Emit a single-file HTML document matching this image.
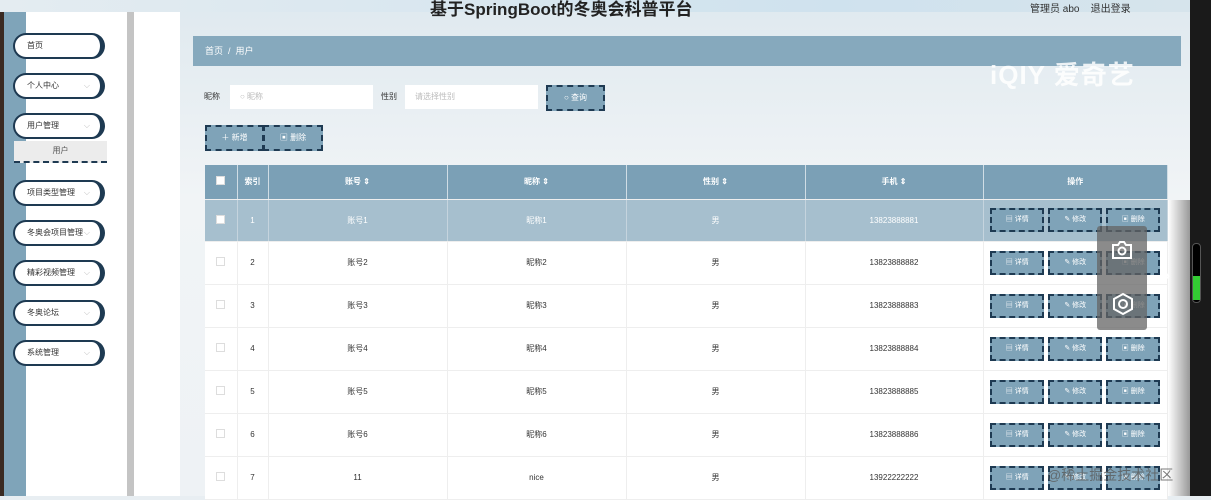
<!DOCTYPE html>
<html><head><meta charset="utf-8"><style>
*{box-sizing:border-box;margin:0;padding:0}
body{width:1211px;height:496px;overflow:hidden;position:relative;background:#e8eef2;font-family:"Liberation Sans","Noto Sans CJK SC",sans-serif;font-size:9px;color:#333}
.abs{position:absolute}
.bg{left:134px;top:0;width:1056px;height:496px;background:linear-gradient(180deg,#dfe9ef 0,#f1f4f6 40%,#eef2f5 100%)}
.top{left:0;top:0;width:1190px;height:12px;background:linear-gradient(90deg,#e4ecf1,#cfe2ee 70%,#d6e4ec)}
.title{left:430px;top:-5px;font-size:17px;font-weight:bold;color:#222}
.side{left:0;top:12px;width:127px;height:484px;background:#fff;border-left:4px solid #3a2a22}
.strip{left:4px;top:12px;width:22px;height:484px;background:#7fa4b9}
.grey{left:127px;top:12px;width:7px;height:484px;background:#c4c4c4}
.white2{left:134px;top:12px;width:46px;height:484px;background:#fff}
.mi{position:absolute;left:13px;width:92px;height:26px;border-radius:13px;background:#fff;border:2px solid #1e3a52;border-right-width:5px;font-size:8px;line-height:22px;padding-left:12px;color:#333}
.mi i{position:absolute;right:10px;top:0;font-style:normal;color:#bbb;font-size:8px}
.crumb{left:193px;top:36px;width:988px;height:30px;background:#86a9bd;color:#fff;font-size:9px;line-height:30px;padding-left:12px}
.inp{background:#fff;height:24px;top:85px;font-size:8px;color:#bbb;line-height:24px;padding-left:10px}
.btn{position:absolute;background:#7fa3b8;border:2px dashed #1e3a52;color:#fff;font-size:8px;text-align:center}
table{position:absolute;left:205px;top:165px;border-collapse:collapse;width:963px}
td,th{text-align:center;font-size:8px;border-right:1px solid #eee;border-bottom:1px solid #eee}
th{background:#7ba0b6;color:#fff;height:34px;font-weight:bold;border-right:1px solid #d0dde5}
tr.r td{height:43px;background:#fff}
tr.h td{background:#a6bfce;color:#fff;height:42px;border-right:1px solid #c5d4de}
.cb{display:inline-block;width:9px;height:9px;border:1px solid #ddd;background:#fff}
.ab{display:inline-block;width:54px;height:24px;margin:0 2px;background:#7fa3b8;border:2px dashed #1e3a52;color:#fff;font-size:7px;line-height:20px;vertical-align:middle}
.right{left:1190px;top:0;width:21px;height:496px;background:#1a1a1a}
</style></head><body>
<div class="abs bg"></div>
<div class="abs top"></div>
<div class="abs title">基于SpringBoot的冬奥会科普平台</div>
<div class="abs" style="left:1030px;top:0;font-size:10px;color:#333">管理员 abo &nbsp;&nbsp; 退出登录</div>
<div class="abs side"></div>
<div class="abs strip"></div>
<div class="abs grey"></div>
<div class="abs white2"></div>
<div class="mi" style="top:33px">首页</div>
<div class="mi" style="top:73px">个人中心<i>⌵</i></div>
<div class="mi" style="top:113px">用户管理<i>⌵</i></div>
<div class="abs" style="left:14px;top:141px;width:93px;height:22px;background:#ececec;border-bottom:2px dashed #1e3a52;text-align:center;line-height:20px;font-size:8px;color:#555">用户</div>
<div class="mi" style="top:180px">项目类型管理<i>⌵</i></div>
<div class="mi" style="top:220px">冬奥会项目管理<i>⌵</i></div>
<div class="mi" style="top:260px">精彩视频管理<i>⌵</i></div>
<div class="mi" style="top:300px">冬奥论坛<i>⌵</i></div>
<div class="mi" style="top:340px">系统管理<i>⌵</i></div>
<div class="abs crumb">首页 &nbsp;/&nbsp; 用户</div>
<div class="abs" style="left:990px;top:55px;font-size:26px;color:rgba(255,255,255,.85);font-weight:bold;letter-spacing:1px">iQIY 爱奇艺</div>
<div class="abs" style="left:204px;top:91px;font-size:8px">昵称</div>
<div class="abs inp" style="left:230px;width:143px">○ 昵称</div>
<div class="abs" style="left:381px;top:91px;font-size:8px">性别</div>
<div class="abs inp" style="left:405px;width:133px">请选择性别</div>
<div class="btn" style="left:546px;top:85px;width:59px;height:26px;line-height:22px">○ 查询</div>
<div class="btn" style="left:205px;top:125px;width:59px;height:26px;line-height:22px">＋ 新增</div>
<div class="btn" style="left:263px;top:125px;width:60px;height:26px;line-height:22px">▣ 删除</div>
<table>
<tr><th style="width:32px"><span class="cb"></span></th><th style="width:31px">索引</th><th style="width:179px">账号 ⇕</th><th style="width:179px">昵称 ⇕</th><th style="width:179px">性别 ⇕</th><th style="width:178px">手机 ⇕</th><th>操作</th></tr>
<tr class="h"><td><span class="cb"></span></td><td>1</td><td>账号1</td><td>昵称1</td><td>男</td><td>13823888881</td><td><span class="ab">▤ 详情</span><span class="ab">✎ 修改</span><span class="ab">▣ 删除</span></td></tr>
<tr class="r"><td><span class="cb"></span></td><td>2</td><td>账号2</td><td>昵称2</td><td>男</td><td>13823888882</td><td><span class="ab">▤ 详情</span><span class="ab">✎ 修改</span><span class="ab">▣ 删除</span></td></tr>
<tr class="r"><td><span class="cb"></span></td><td>3</td><td>账号3</td><td>昵称3</td><td>男</td><td>13823888883</td><td><span class="ab">▤ 详情</span><span class="ab">✎ 修改</span><span class="ab">▣ 删除</span></td></tr>
<tr class="r"><td><span class="cb"></span></td><td>4</td><td>账号4</td><td>昵称4</td><td>男</td><td>13823888884</td><td><span class="ab">▤ 详情</span><span class="ab">✎ 修改</span><span class="ab">▣ 删除</span></td></tr>
<tr class="r"><td><span class="cb"></span></td><td>5</td><td>账号5</td><td>昵称5</td><td>男</td><td>13823888885</td><td><span class="ab">▤ 详情</span><span class="ab">✎ 修改</span><span class="ab">▣ 删除</span></td></tr>
<tr class="r"><td><span class="cb"></span></td><td>6</td><td>账号6</td><td>昵称6</td><td>男</td><td>13823888886</td><td><span class="ab">▤ 详情</span><span class="ab">✎ 修改</span><span class="ab">▣ 删除</span></td></tr>
<tr class="r"><td><span class="cb"></span></td><td>7</td><td>11</td><td>nice</td><td>男</td><td>13922222222</td><td><span class="ab">▤ 详情</span><span class="ab">✎ 修改</span><span class="ab">▣ 删除</span></td></tr>
</table>
<div class="abs" style="left:1168px;top:200px;width:22px;height:296px;background:linear-gradient(90deg,#fff,#999)"></div>
<div class="abs" style="left:1097px;top:226px;width:50px;height:104px;background:rgba(100,100,100,.75);border-radius:3px"></div>
<svg class="abs" style="left:1111px;top:240px" width="22" height="20" viewBox="0 0 22 20"><path d="M2 5h5l2-3h4l2 3h5v13H2z" fill="none" stroke="#fff" stroke-width="2"/><circle cx="11" cy="11" r="3.5" fill="none" stroke="#fff" stroke-width="2"/></svg>
<svg class="abs" style="left:1111px;top:292px" width="24" height="24" viewBox="0 0 24 24"><path d="M12 2l9 5v10l-9 5-9-5V7z" fill="none" stroke="#fff" stroke-width="2"/><circle cx="12" cy="12" r="4" fill="none" stroke="#fff" stroke-width="2"/></svg>
<div class="abs" style="left:1163px;top:262px;color:#fff;font-size:22px">›</div>
<div class="abs right"></div>
<div class="abs" style="left:1192px;top:243px;width:9px;height:60px;border:1px solid #555;border-radius:4px;background:#000"><div style="margin-top:32px;height:24px;background:#3c3"></div></div>
<div class="abs" style="left:1047px;top:465px;font-size:14px;color:rgba(90,90,90,.8)">@稀土掘金技术社区</div>
</body></html>
